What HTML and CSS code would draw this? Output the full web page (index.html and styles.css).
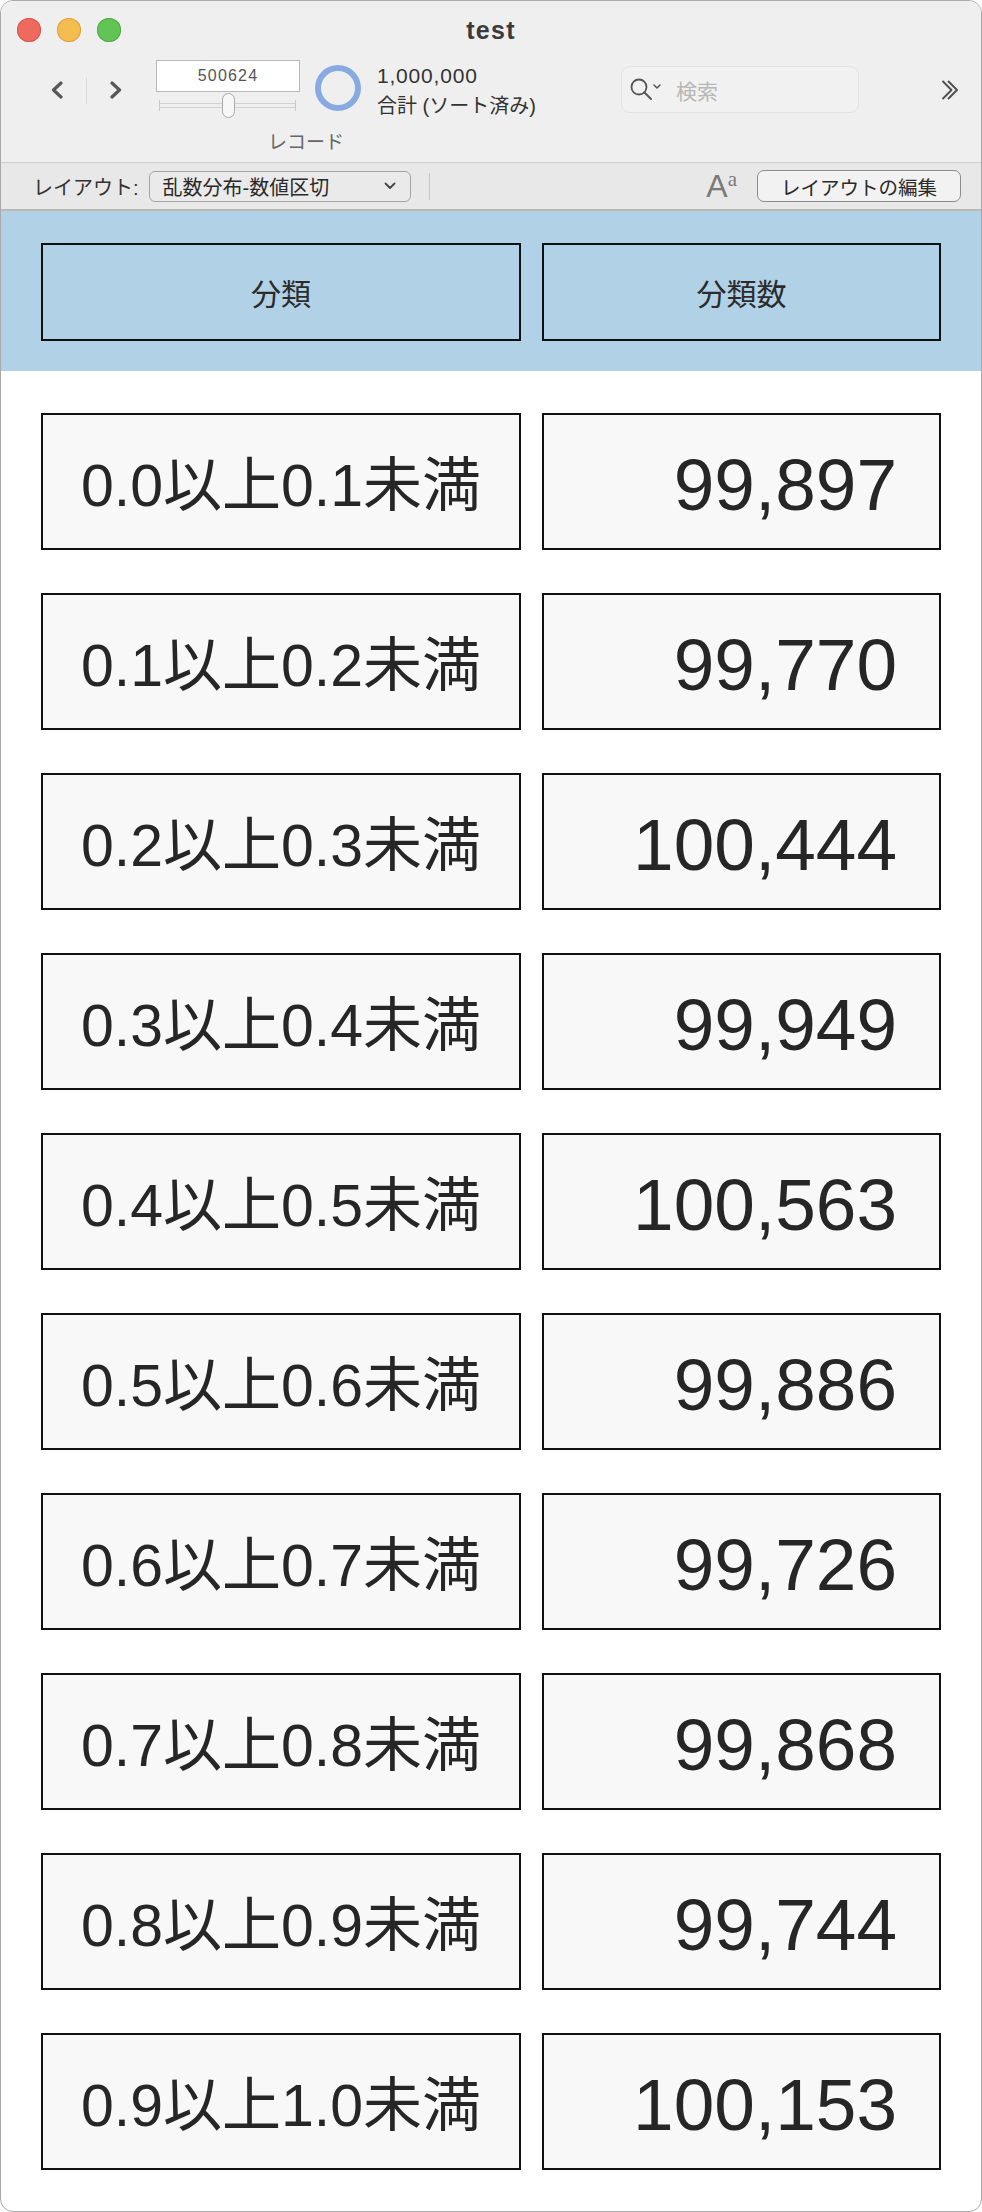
FILE: index.html
```html
<!DOCTYPE html>
<html lang="ja">
<head>
<meta charset="utf-8">
<title>test</title>
<link rel="stylesheet" href="styles.css">
</head>
<body>
<div class="window">
  <div class="titlebar">
    <div class="lights">
      <span class="light red"></span>
      <span class="light yellow"></span>
      <span class="light green"></span>
    </div>
    <div class="title">test</div>
    <div></div>
  </div>

  <div class="toolbar">
    <div class="nav">
      <svg class="chev" width="14" height="18" viewBox="0 0 14 18"><path d="M11 2 L3.5 9 L11 16" fill="none" stroke="#575757" stroke-width="3.2" stroke-linecap="round" stroke-linejoin="round"/></svg>
      <span class="nav-div"></span>
      <svg class="chev" width="14" height="18" viewBox="0 0 14 18"><path d="M3 2 L10.5 9 L3 16" fill="none" stroke="#575757" stroke-width="3.2" stroke-linecap="round" stroke-linejoin="round"/></svg>
    </div>
    <div class="record">
      <div class="record-box">500624</div>
      <svg class="slider" width="144" height="26" viewBox="0 0 144 26">
        <line x1="3" y1="11.5" x2="140" y2="11.5" stroke="#d2d2d2" stroke-width="1"/>
        <line x1="3" y1="15.5" x2="140" y2="15.5" stroke="#d2d2d2" stroke-width="1"/>
        <line x1="3.5" y1="8" x2="3.5" y2="19" stroke="#c9c9c9" stroke-width="1"/>
        <line x1="139.5" y1="8" x2="139.5" y2="19" stroke="#c9c9c9" stroke-width="1"/>
        <rect x="66.5" y="1.5" width="12" height="24" rx="6" fill="#f7f7f7" stroke="#a9a9a9" stroke-width="1"/>
      </svg>
      <div class="record-label">レコード</div>
    </div>
    <svg class="ring" width="46" height="46" viewBox="0 0 46 46"><circle cx="23" cy="23" r="20" fill="none" stroke="#88a9e1" stroke-width="6"/></svg>
    <div class="count">
      <div class="count-num">1,000,000</div>
      <div class="count-sub">合計 (ソート済み)</div>
    </div>
    <div class="search">
      <svg class="search-ico" width="32" height="24" viewBox="0 0 32 24">
        <circle cx="9" cy="9" r="7.5" fill="none" stroke="#555" stroke-width="1.8"/>
        <line x1="14.5" y1="14.5" x2="21" y2="21" stroke="#555" stroke-width="2" stroke-linecap="round"/>
        <path d="M24 7 L27 10 L30 7" fill="none" stroke="#555" stroke-width="1.5" stroke-linecap="round" stroke-linejoin="round"/>
      </svg>
      <span class="search-ph">検索</span>
    </div>
    <svg class="more" width="18" height="22" viewBox="0 0 18 22">
      <path d="M1.5 2 L10.5 11 L1.5 20" fill="none" stroke="#4f4f4f" stroke-width="1.9" stroke-linejoin="round"/>
      <path d="M7 2 L16 11 L7 20" fill="none" stroke="#4f4f4f" stroke-width="1.9" stroke-linejoin="round"/>
    </svg>
  </div>

  <div class="layoutbar">
    <span class="lb-label">レイアウト:</span>
    <div class="dropdown">
      <span>乱数分布-数値区切</span>
      <svg width="12" height="8" viewBox="0 0 12 8"><path d="M1.5 1.5 L6 6 L10.5 1.5" fill="none" stroke="#444" stroke-width="1.8" stroke-linecap="round" stroke-linejoin="round"/></svg>
    </div>
    <span class="lb-div"></span>
    <span class="font-ico"><span class="fa">A</span><span class="fsup">a</span></span>
    <div class="edit-btn">レイアウトの編集</div>
  </div>

  <div class="head-band">
    <div class="hcell">分類</div>
    <div class="hcell">分類数</div>
  </div>

  <div class="body-area">
    <div class="row"><div class="cell cat">0.0以上0.1未満</div><div class="cell num">99,897</div></div>
    <div class="row"><div class="cell cat">0.1以上0.2未満</div><div class="cell num">99,770</div></div>
    <div class="row"><div class="cell cat">0.2以上0.3未満</div><div class="cell num">100,444</div></div>
    <div class="row"><div class="cell cat">0.3以上0.4未満</div><div class="cell num">99,949</div></div>
    <div class="row"><div class="cell cat">0.4以上0.5未満</div><div class="cell num">100,563</div></div>
    <div class="row"><div class="cell cat">0.5以上0.6未満</div><div class="cell num">99,886</div></div>
    <div class="row"><div class="cell cat">0.6以上0.7未満</div><div class="cell num">99,726</div></div>
    <div class="row"><div class="cell cat">0.7以上0.8未満</div><div class="cell num">99,868</div></div>
    <div class="row"><div class="cell cat">0.8以上0.9未満</div><div class="cell num">99,744</div></div>
    <div class="row"><div class="cell cat">0.9以上1.0未満</div><div class="cell num">100,153</div></div>
  </div>
</div>
</body>
</html>
```

FILE: styles.css
```css
* { box-sizing: border-box; }
html, body { margin: 0; padding: 0; background: #ffffff; }
body {
  font-family: "Liberation Sans", "Noto Sans CJK JP", sans-serif;
  color: #333;
}
.window {
  width: 982px;
  height: 2212px;
  border: 1px solid #a9a9a9;
  border-radius: 13px;
  overflow: hidden;
  background: #ffffff;
}

/* title bar */
.titlebar {
  height: 58px;
  display: grid;
  grid-template-columns: 1fr auto 1fr;
  align-items: center;
  padding-left: 16px;
  padding-right: 16px;
  background: #f0efef;
}
.lights { display: flex; gap: 16px; }
.light {
  width: 24px; height: 24px; border-radius: 50%;
  display: block;
}
.red { background: #ee6a5f; box-shadow: inset 0 0 0 1px #d5574c; }
.yellow { background: #f5bd4f; box-shadow: inset 0 0 0 1px #d9a23c; }
.green { background: #61c454; box-shadow: inset 0 0 0 1px #50a843; }
.title {
  font-weight: bold;
  font-size: 25px;
  color: #3b3b3b;
  letter-spacing: 1.3px;
}

/* toolbar */
.toolbar {
  height: 104px;
  display: flex;
  align-items: flex-start;
  padding-left: 49px;
  padding-right: 22px;
  background: #f0efef;
  border-bottom: 1px solid #d0d0d0;
}
.nav {
  display: flex;
  align-items: center;
  height: 36px;
  margin-top: 13px;
}
.nav-div {
  display: block;
  width: 1px; height: 27px;
  background: #dcdcdc;
  margin: 0 22px;
}
.chev { display: block; }
.record {
  margin-left: 33px;
  margin-top: 1px;
  width: 144px;
  display: flex;
  flex-direction: column;
}
.record-box {
  height: 32px;
  border: 1px solid #b9b9b9;
  background: #ffffff;
  font-size: 16px;
  color: #555;
  letter-spacing: 1.2px;
  display: flex;
  align-items: center;
  justify-content: center;
}
.slider { display: block; }
.record-label {
  margin-top: 13px;
  margin-left: 112px;
  width: max-content;
  white-space: nowrap;
  font-size: 19px;
  line-height: 24px;
  color: #666;
}
.ring { display: block; margin-left: 15px; margin-top: 6px; }
.count {
  margin-left: 16px;
  margin-top: 1px;
  line-height: 31px;
  color: #333;
}
.count-num { font-size: 21px; letter-spacing: 0.8px; }
.count-sub { font-size: 20px; }
.search {
  margin-left: auto;
  margin-top: 7px;
  width: 238px;
  height: 47px;
  border: 1px solid #e3e3e3;
  border-radius: 9px;
  background: #f2f1f1;
  display: flex;
  align-items: center;
  padding-left: 8px;
}
.search-ico { display: block; margin-top: 1px; }
.search-ph {
  margin-left: 14px;
  font-size: 21px;
  color: #b7b7b7;
}
.more { display: block; margin-left: 82px; margin-top: 20px; }

/* layout bar */
.layoutbar {
  height: 48px;
  display: flex;
  align-items: center;
  padding-left: 32px;
  padding-right: 20px;
  background: #e9e8e8;
  border-bottom: 2px solid #b9b9b9;
}
.lb-label { font-size: 20px; color: #333; }
.dropdown {
  margin-left: 10px;
  width: 262px;
  height: 31px;
  border: 1px solid #a3a3a3;
  border-radius: 6px;
  background: #ebeaea;
  display: flex;
  align-items: center;
  justify-content: space-between;
  padding-left: 13px;
  padding-right: 14px;
  font-size: 20px;
  color: #2a2a2a;
}
.dropdown svg { display: block; }
.lb-div {
  display: block;
  width: 1px; height: 27px;
  background: #c6c6c6;
  margin-left: 18px;
}
.font-ico {
  margin-left: auto;
  display: flex;
  align-items: flex-start;
  color: #7a7a7a;
  height: 30px;
}
.fa { font-size: 32px; line-height: 30px; }
.fsup {
  font-family: "Liberation Serif", serif;
  font-size: 21px;
  line-height: 17px;
  margin-left: 0px;
}
.edit-btn {
  margin-left: 20px;
  width: 204px;
  height: 32px;
  border: 1px solid #8c8c8c;
  border-radius: 7px;
  background: #f2f2f2;
  display: flex;
  align-items: center;
  justify-content: center;
  font-size: 19.5px;
  color: #2a2a2a;
}

/* header band */
.head-band {
  background: #b1d1e6;
  display: grid;
  grid-template-columns: 480px 399px;
  column-gap: 21px;
  padding: 32px 0 30px 40px;
}
.hcell {
  height: 98px;
  border: 2px solid #111;
  display: flex;
  align-items: center;
  justify-content: center;
  font-size: 30px;
  color: #2b2b2b;
}

/* body rows */
.body-area {
  padding: 42px 0 0 40px;
  display: flex;
  flex-direction: column;
  gap: 43px;
}
.row {
  display: grid;
  grid-template-columns: 480px 399px;
  column-gap: 21px;
}
.cell {
  height: 137px;
  border: 2px solid #111;
  background: #f8f8f8;
  display: flex;
  align-items: center;
  color: #262626;
  line-height: 1;
}
.cat {
  justify-content: center;
  font-size: 59px;
  padding-top: 10px;
}
.num {
  justify-content: flex-end;
  padding-right: 42px;
  padding-top: 5px;
  font-size: 73px;
}
```
